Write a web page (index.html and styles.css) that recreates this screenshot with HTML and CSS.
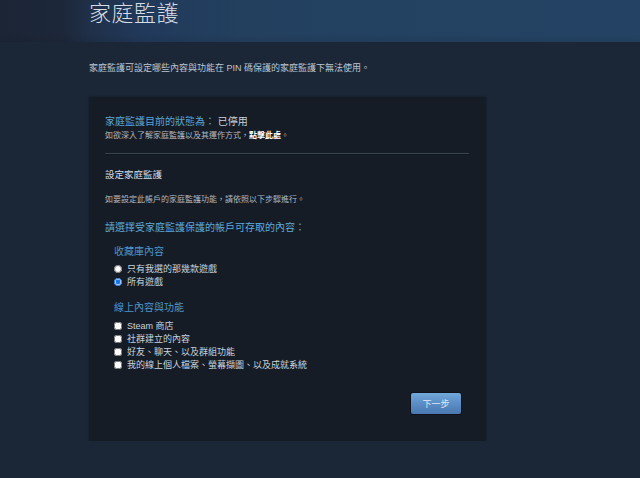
FILE: index.html
```html
<!DOCTYPE html>
<html lang="zh-Hant">
<head>
<meta charset="utf-8">
<title>家庭監護</title>
<link rel="stylesheet" href="styles.css">
</head>
<body>
<header class="page-header">
  <h1 class="page-title">家庭監護</h1>
</header>
<main class="content">
  <p class="intro">家庭監護可設定哪些內容與功能在 PIN 碼保護的家庭監護下無法使用。</p>
  <section class="panel">
    <div class="status">
      <h2 class="status-title"><span class="status-label">家庭監護目前的狀態為：</span> 已停用</h2>
      <p class="note status-note">如欲深入了解家庭監護以及其運作方式，<a class="link" href="#">點擊此處</a>。</p>
    </div>
    <hr class="divider">
    <h3 class="setup-title">設定家庭監護</h3>
    <p class="note setup-note">如要設定此帳戶的家庭監護功能，請依照以下步驟進行。</p>
    <h3 class="select-title">請選擇受家庭監護保護的帳戶可存取的內容：</h3>
    <div class="group">
      <h4 class="group-title">收藏庫內容</h4>
      <ul class="options">
        <li class="option"><input class="radio" type="radio" name="lib" id="r1"><label for="r1">只有我選的那幾款遊戲</label></li>
        <li class="option"><input class="radio" type="radio" name="lib" id="r2" checked><label for="r2">所有遊戲</label></li>
      </ul>
    </div>
    <div class="group group-online">
      <h4 class="group-title">線上內容與功能</h4>
      <ul class="options options-check">
        <li class="option"><input class="check" type="checkbox" id="c1"><label for="c1">Steam 商店</label></li>
        <li class="option"><input class="check" type="checkbox" id="c2"><label for="c2">社群建立的內容</label></li>
        <li class="option"><input class="check" type="checkbox" id="c3"><label for="c3">好友、聊天、以及群組功能</label></li>
        <li class="option"><input class="check" type="checkbox" id="c4"><label for="c4">我的線上個人檔案、螢幕擷圖、以及成就系統</label></li>
      </ul>
    </div>
    <div class="actions">
      <button class="btn-next" type="button">下一步</button>
    </div>
  </section>
</main>
</body>
</html>
```

FILE: styles.css
```css
* { box-sizing: border-box; }
html, body {
  margin: 0;
  padding: 0;
  background: #1b2637;
  font-family: "Liberation Sans", "Noto Sans CJK TC", sans-serif;
  color: #c6d4df;
}
.page-header {
  height: 42px;
  padding-left: 89px;
  background:
    linear-gradient(to bottom, rgba(0,0,0,0) 80%, rgba(0,0,0,0.08) 100%),
    linear-gradient(90deg, #1b2536 0, #1c2739 62px, #1f3049 90px, #21395a 140px, #23405f 240px, #244364 100%);
}
.page-title {
  margin: 0;
  font-family: "Noto Sans CJK TC", sans-serif;
  font-weight: 300;
  font-size: 22px;
  line-height: 22px;
  letter-spacing: 0.5px;
  color: #d4dde6;
}
.content {
  padding-left: 89px;
}
.intro {
  margin: 20px 0 0;
  font-size: 9px;
  line-height: 12px;
  color: #bcc7d2;
}
.panel {
  margin-top: 23px;
  width: 397px;
  padding: 18px 17px 27px 16px;
  background: #161c26;
  box-shadow: 0 0 2px rgba(0,0,0,0.4);
}
.status-title {
  margin: 0;
  font-weight: normal;
  font-size: 10px;
  line-height: 14px;
  color: #c6d4df;
}
.status-label { color: #5aa5d6; }
.note {
  margin: 0;
  font-size: 8px;
  line-height: 11px;
  color: #b0b9c2;
}
.status-note { margin-top: 1px; }
.link {
  color: #ffffff;
  font-weight: bold;
  text-decoration: none;
}
.divider {
  margin: 12px 0 0;
  border: 0;
  height: 2px;
  border-top: 1px solid #3a4552;
  border-bottom: 1px solid #10151c;
}
.setup-title {
  margin: 13px 0 0;
  font-weight: normal;
  font-size: 9.5px;
  line-height: 14px;
  color: #d0dae3;
}
.setup-note { margin-top: 12px; }
.select-title {
  margin: 16px 0 0;
  font-weight: normal;
  font-size: 10px;
  line-height: 14px;
  color: #5eaadc;
}
.group { padding-left: 9px; }
.group-title {
  margin: 10px 0 0;
  font-weight: normal;
  font-size: 10px;
  line-height: 14px;
  color: #4f96c8;
}
.group-online .group-title { margin-top: 13px; }
.options {
  list-style: none;
  margin: 3px 0 0;
  padding: 0;
}
.options-check { margin-top: 4px; }
.option {
  display: flex;
  align-items: center;
  height: 13px;
  font-size: 9px;
  color: #c6d4df;
}
.radio, .check {
  margin: 0 5px 0 0;
  width: 8px;
  height: 8px;
  flex: none;
  accent-color: #1a73e8;
}
.check { border-radius: 1px; }
.actions {
  display: flex;
  justify-content: flex-end;
  padding-right: 8px;
  margin-top: 22px;
}
.btn-next {
  width: 50px;
  height: 21px;
  padding: 0;
  border: 0;
  border-radius: 2px;
  background: linear-gradient(to bottom, #72a8da 0%, #5b8dc6 50%, #4a78b0 100%);
  box-shadow: 0 0 0 1px #0e131b;
  font-family: "Noto Sans CJK TC", sans-serif;
  font-size: 9px;
  color: #dce9f6;
}
```
